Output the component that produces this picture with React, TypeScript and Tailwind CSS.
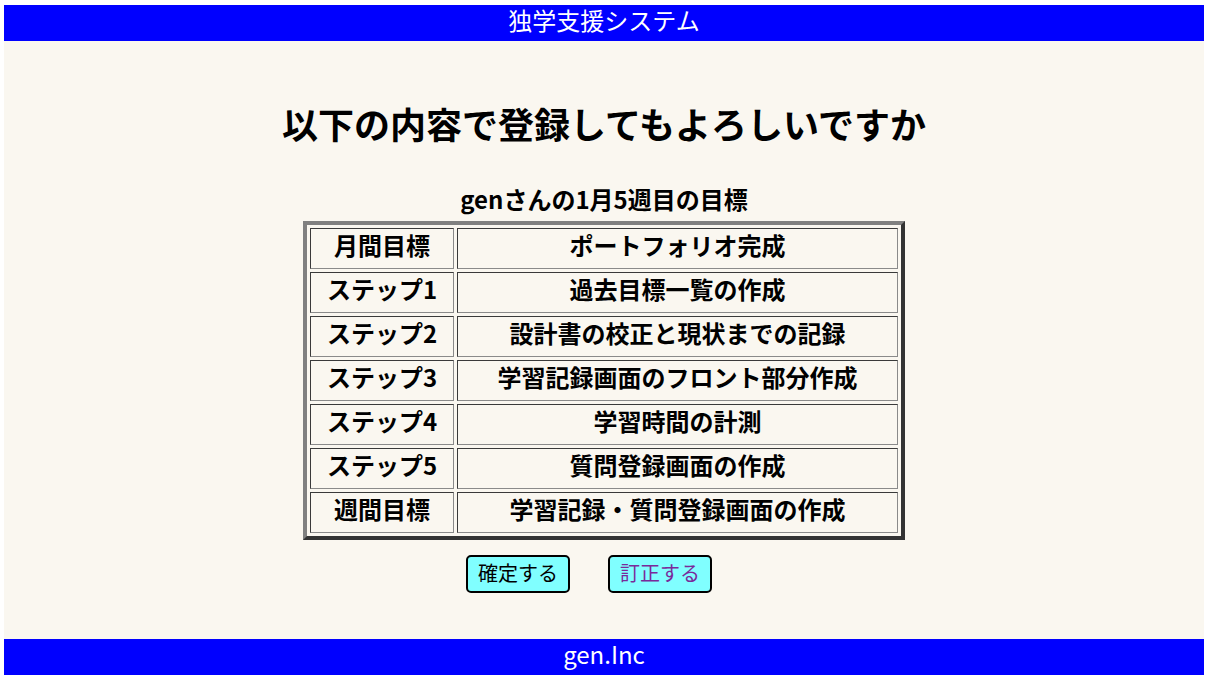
import { FC } from "react";

const rows: [string, string][] = [
  ["月間目標", "ポートフォリオ完成"],
  ["ステップ1", "過去目標一覧の作成"],
  ["ステップ2", "設計書の校正と現状までの記録"],
  ["ステップ3", "学習記録画面のフロント部分作成"],
  ["ステップ4", "学習時間の計測"],
  ["ステップ5", "質問登録画面の作成"],
  ["週間目標", "学習記録・質問登録画面の作成"],
];

const cellClass =
  "border border-t-[#3a3a3a] border-l-[#3a3a3a] border-r-[#8a8a8a] border-b-[#8a8a8a] pt-0 pb-[8px] px-0 text-center text-[24px] font-bold leading-[31px]";

const App: FC = () => {
  return (
    <div className="bg-white min-h-screen pt-[5px] pl-1 pr-[1px] font-['Noto_Sans_CJK_JP',sans-serif] text-black">
      <div className="flex flex-col h-[670px] bg-[#faf7f0]">
        <header className="h-9 pb-[6px] bg-[#0000ff] text-white text-[24px] leading-[30px] text-center">
          独学支援システム
        </header>

        <main className="flex-1 flex flex-col items-center pt-[55px]">
          <h1 className="text-[36px] font-bold leading-[54px]">
            以下の内容で登録してもよろしいですか
          </h1>
          <h2 className="mt-[31px] text-[24px] font-bold leading-9">
            genさんの1月5週目の目標
          </h2>
          <table className="mt-[4px] border-separate border-spacing-[3px] border-4 border-t-[#808080] border-l-[#808080] border-r-[#333333] border-b-[#333333]">
            <tbody>
              {rows.map(([label, value], index) => (
                <tr key={index}>
                  <td className={`${cellClass} w-[144px]`}>{label}</td>
                  <td className={`${cellClass} w-[441px]`}>{value}</td>
                </tr>
              ))}
            </tbody>
          </table>
          <div className="mt-[15px] flex gap-[38px] pr-[30px]">
            <button className="w-[104px] h-[38px] pb-[3px] bg-[#80ffff] border-[2.5px] border-black rounded-[5px] text-[20px] leading-none text-black">
              確定する
            </button>
            <button className="w-[104px] h-[38px] pb-[3px] bg-[#80ffff] border-[2.5px] border-black rounded-[5px] text-[20px] leading-none text-[#7a2a9a]">
              訂正する
            </button>
          </div>
        </main>

        <footer className="h-9 pb-[6px] bg-[#0000ff] text-white text-[24px] leading-[30px] text-center">
          gen.Inc
        </footer>
      </div>
    </div>
  );
};

export default App;
